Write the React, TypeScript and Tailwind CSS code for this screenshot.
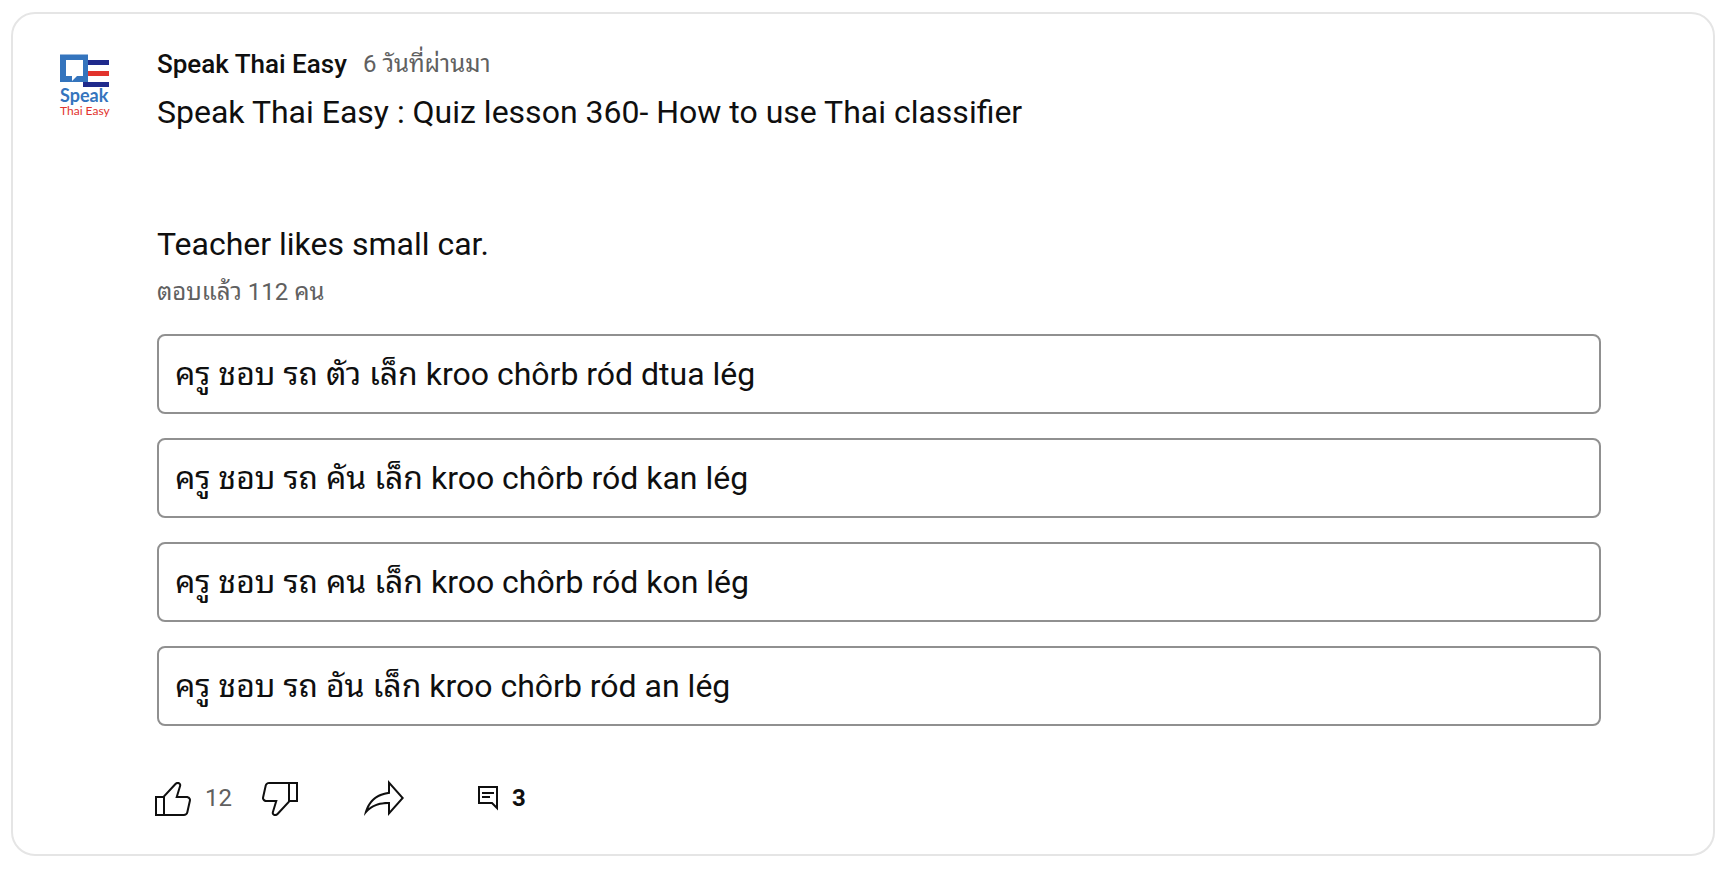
import React from "react";

const options = [
  "ครู ชอบ รถ ตัว เล็ก kroo chôrb ród dtua lég",
  "ครู ชอบ รถ คัน เล็ก kroo chôrb ród kan lég",
  "ครู ชอบ รถ คน เล็ก kroo chôrb ród kon lég",
  "ครู ชอบ รถ อัน เล็ก kroo chôrb ród an lég",
];

function ActionIcon({ d }: { d: string }) {
  return (
    <svg viewBox="0 0 24 24" className="size-12" fill="currentColor" aria-hidden="true">
      <path d={d} />
    </svg>
  );
}

const LIKE =
  "M18.77,11h-4.23l1.52-4.94C16.38,5.03,15.54,4,14.38,4c-0.58,0-1.14,0.24-1.52,0.65L7,11H3v10h4h1h9.43c1.06,0,1.98-0.67,2.19-1.61l1.34-6C21.23,12.15,20.18,11,18.77,11z M7,20H4v-8h3V20z M19.98,13.17l-1.34,6C18.54,19.65,18.03,20,17.43,20H8v-8.61l5.6-6.06C13.79,5.12,14.08,5,14.38,5c0.26,0,0.5,0.11,0.63,0.3c0.07,0.1,0.15,0.26,0.09,0.47l-1.52,4.94L13.18,12h1.35h4.23c0.41,0,0.8,0.17,1.03,0.46C19.92,12.61,20.05,12.86,19.98,13.17z";
const DISLIKE =
  "M17,4h-1H6.57C5.5,4,4.59,4.67,4.38,5.61l-1.34,6C2.77,12.85,3.82,14,5.23,14h4.23l-1.52,4.94C7.62,19.97,8.46,21,9.62,21c0.58,0,1.14-0.24,1.52-0.65L17,14h4V4H17z M10.4,19.67C10.21,19.88,9.92,20,9.62,20c-0.26,0-0.5-0.11-0.63-0.3c-0.07-0.1-0.15-0.26-0.09-0.47l1.52-4.94l0.4-1.29H9.46H5.23c-0.41,0-0.8-0.17-1.03-0.46c-0.12-0.15-0.25-0.4-0.18-0.72l1.34-6C5.46,5.35,5.97,5,6.57,5H16v8.61L10.4,19.67z M20,13h-3V5h3V13z";
const SHARE =
  "M15,5.63L20.66,12L15,18.37V15v-1h-1c-3.96,0-7.14,1-9.75,3.09c1.84-4.07,5.11-6.4,9.89-7.1L15,9.86V9V5.63 M14,3v6C6.22,10.13,3.11,15.33,2,21c2.78-3.97,6.44-6,12-6v6l8-9L14,3L14,3z";

function ChannelLogo() {
  return (
    <svg viewBox="0 0 80 80" className="size-20 shrink-0" role="img" aria-label="Speak Thai Easy">
      <rect x="36" y="14" width="22" height="5" fill="#1f2a8c" />
      <rect x="36" y="25" width="22" height="5" fill="#e2332d" />
      <rect x="32" y="36" width="26" height="5" fill="#1f2a8c" />
      <rect x="9" y="8.5" width="28" height="27.5" fill="#3474bd" />
      <path d="M15 14h17v16h-6l-5 5v-5h-6z" fill="#fff" />
      <text x="9" y="56" fontSize="18" fontWeight="700" fill="#3474bd" fontFamily="Lato, sans-serif">
        Speak
      </text>
      <text x="9" y="69" fontSize="12" fill="#e2332d" fontFamily="Lato, sans-serif">
        Thai Easy
      </text>
    </svg>
  );
}

export default function App() {
  return (
    <main className="bg-white px-[11px] py-3 font-['Roboto','Thonburi','Noto_Sans_Thai_Looped','Loma',sans-serif] text-[#0f0f0f]">
      <article className="flex rounded-3xl border-2 border-[#e5e5e5] pt-8 pr-28 pb-8 pl-[38px]">
        <ChannelLogo />
        <div className="ml-[26px] min-w-0 flex-1">
          <header className="flex h-9 items-center gap-4">
            <a href="#channel" className="text-[26px] leading-9 font-medium">
              Speak Thai Easy
            </a>
            <a href="#post" className="text-2xl leading-9 text-[#606060]">
              6 วันที่ผ่านมา
            </a>
          </header>
          <p className="mt-2 text-[32px] leading-11">Speak Thai Easy : Quiz lesson 360- How to use Thai classifier</p>
          <p className="mt-22 text-[32px] leading-11">Teacher likes small car.</p>
          <p className="mt-1 text-2xl leading-11 text-[#606060]">ตอบแล้ว 112 คน</p>
          <ul className="mt-5 flex flex-col gap-6">
            {options.map((option) => (
              <li key={option}>
                <button
                  type="button"
                  className="block h-20 w-full cursor-pointer rounded-lg border-2 border-[#909090] px-4 text-left text-[32px] leading-11"
                >
                  {option}
                </button>
              </li>
            ))}
          </ul>
          <footer className="-ml-2 mt-12 flex h-12 items-center">
            <button type="button" aria-label="Like" className="cursor-pointer">
              <ActionIcon d={LIKE} />
            </button>
            <span className="ml-2 w-[51px] text-2xl text-[#606060]">12</span>
            <button type="button" aria-label="Dislike" className="cursor-pointer">
              <ActionIcon d={DISLIKE} />
            </button>
            <button type="button" aria-label="Share" className="ml-14 cursor-pointer">
              <ActionIcon d={SHARE} />
            </button>
            <button type="button" className="ml-16 flex cursor-pointer items-center gap-2 text-2xl font-bold">
              <svg viewBox="0 0 32 32" className="size-8" fill="none" stroke="currentColor" strokeWidth="2" aria-label="Comments">
                <path d="M7 5h18v21l-5-5H7z" />
                <path d="M10 11h12M10 15h8" />
              </svg>
              3
            </button>
          </footer>
        </div>
      </article>
    </main>
  );
}
